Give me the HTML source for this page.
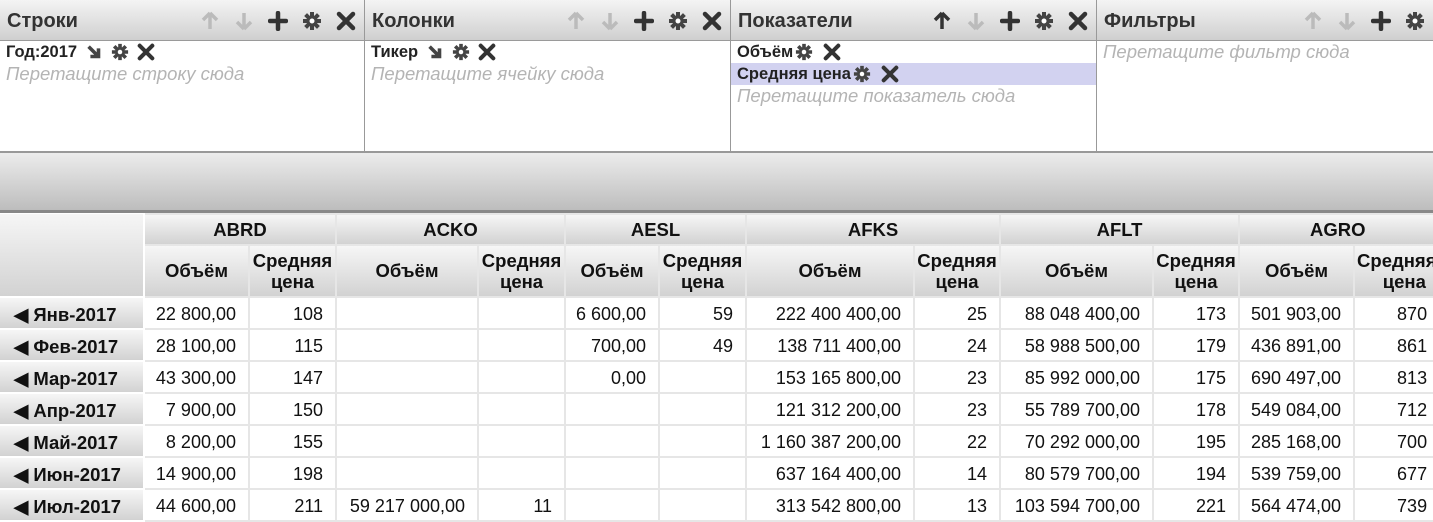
<!DOCTYPE html>
<html><head><meta charset="utf-8"><style>
*{box-sizing:border-box;margin:0;padding:0}
body{width:1433px;height:519px;overflow:hidden;background:#fff;font-family:"Liberation Sans",Arial,sans-serif;position:relative}
.panel{position:absolute;top:0;height:153px;border-right:1px solid #999;border-bottom:2px solid #999}
.ph{height:41px;background:linear-gradient(#f4f4f4,#cfcfcf);border-bottom:1px solid #9a9a9a;position:relative}
.ph .t{position:absolute;left:7px;top:10px;font-weight:bold;font-size:20px;color:#333}
.ph .ic{position:absolute;top:11px;right:8px;display:flex;gap:14px;align-items:center}
.ic svg{width:20px;height:20px;display:block}
.item{font-weight:bold;font-size:16.5px;color:#222;height:22px;line-height:22px;padding-left:6px;display:flex;align-items:center;gap:8px}
.item svg{width:18px;height:18px}
.hint{font-style:italic;color:#b4b4b4;font-size:18.5px;padding-left:6px;line-height:22px}
.bar{position:absolute;top:153px;left:0;width:1433px;height:60px;background:linear-gradient(#ececec,#bdbdbd);border-bottom:3px solid #888}
table{position:absolute;top:213px;left:-2px;border-collapse:collapse;table-layout:fixed;font-size:18px}
td,th{overflow:hidden;white-space:nowrap}
th{background:linear-gradient(#f6f6f6,#d2d2d2);font-weight:bold;color:#111;border:2px solid #e6e6e6;text-align:center;font-size:18.5px}
td{border:2px solid #e6e6e6;text-align:right;padding-right:12px;color:#111;height:32px;padding-top:2px;vertical-align:top;line-height:28px}
th.rh{text-align:left;padding-left:14px;vertical-align:bottom;line-height:26px;border-color:#fff}
.sub{line-height:21px}
</style></head><body>
<svg width="0" height="0" style="position:absolute"><defs>
<symbol id="up" viewBox="0 0 20 20"><path d="M10 2 L3 9 M10 2 L17 9 M10 3 V18" stroke="currentColor" stroke-width="3.5" fill="none"/></symbol>
<symbol id="dn" viewBox="0 0 20 20"><path d="M10 18 L3 11 M10 18 L17 11 M10 17 V2" stroke="currentColor" stroke-width="3.5" fill="none"/></symbol>
<symbol id="pl" viewBox="0 0 20 20"><path d="M10 2 V18 M2 10 H18" stroke="currentColor" stroke-width="4.5" stroke-linecap="round"/></symbol>
<symbol id="gr" viewBox="0 0 20 20"><g stroke="currentColor" stroke-width="4"><path d="M10 1V19M1 10H19M3.6 3.6L16.4 16.4M16.4 3.6L3.6 16.4"/></g><circle cx="10" cy="10" r="5.5" fill="currentColor"/><circle cx="10" cy="10" r="2.5" fill="#fff"/></symbol>
<symbol id="x" viewBox="0 0 20 20"><path d="M3 3L17 17M17 3L3 17" stroke="currentColor" stroke-width="4.5" stroke-linecap="round"/></symbol>
<symbol id="ar" viewBox="0 0 20 20"><path d="M4 4L14 14M15 6V15H6" stroke="currentColor" stroke-width="4" fill="none"/></symbol>
</defs></svg>

<div class="panel" style="left:0;width:365px">
<div class="ph"><span class="t">Строки</span><div class="ic"><svg style="color:#bbb"><use href="#up"/></svg><svg style="color:#bbb"><use href="#dn"/></svg><svg style="color:#333"><use href="#pl"/></svg><svg style="color:#444"><use href="#gr"/></svg><svg style="color:#333"><use href="#x"/></svg></div></div>
<div class="item">Год:2017 <svg style="color:#444"><use href="#ar"/></svg><svg style="color:#444"><use href="#gr"/></svg><svg style="color:#333"><use href="#x"/></svg></div>
<div class="hint">Перетащите строку сюда</div></div>

<div class="panel" style="left:365px;width:366px">
<div class="ph"><span class="t">Колонки</span><div class="ic"><svg style="color:#bbb"><use href="#up"/></svg><svg style="color:#bbb"><use href="#dn"/></svg><svg style="color:#333"><use href="#pl"/></svg><svg style="color:#444"><use href="#gr"/></svg><svg style="color:#333"><use href="#x"/></svg></div></div>
<div class="item">Тикер <svg style="color:#444"><use href="#ar"/></svg><svg style="color:#444"><use href="#gr"/></svg><svg style="color:#333"><use href="#x"/></svg></div>
<div class="hint">Перетащите ячейку сюда</div></div>

<div class="panel" style="left:731px;width:366px">
<div class="ph"><span class="t">Показатели</span><div class="ic"><svg style="color:#333"><use href="#up"/></svg><svg style="color:#bbb"><use href="#dn"/></svg><svg style="color:#333"><use href="#pl"/></svg><svg style="color:#444"><use href="#gr"/></svg><svg style="color:#333"><use href="#x"/></svg></div></div>
<div class="item" style="gap:2px">Объём<svg style="color:#444"><use href="#gr"/></svg><svg style="color:#333;margin-left:8px"><use href="#x"/></svg></div>
<div class="item" style="gap:2px;background:#d2d2f0">Средняя цена<svg style="color:#444"><use href="#gr"/></svg><svg style="color:#333;margin-left:8px"><use href="#x"/></svg></div>
<div class="hint">Перетащите показатель сюда</div></div>

<div class="panel" style="left:1097px;width:340px;border-right:none">
<div class="ph"><span class="t">Фильтры</span><div class="ic" style="right:12px"><svg style="color:#bbb"><use href="#up"/></svg><svg style="color:#bbb"><use href="#dn"/></svg><svg style="color:#333"><use href="#pl"/></svg><svg style="color:#444"><use href="#gr"/></svg></div></div>
<div class="hint" style="padding-top:0">Перетащите фильтр сюда</div></div>

<div class="bar"></div>

<table style="width:1482px">
<colgroup><col style="width:145px"><col style="width:105px"><col style="width:87px"><col style="width:142px"><col style="width:87px"><col style="width:94px"><col style="width:87px"><col style="width:168px"><col style="width:86px"><col style="width:153px"><col style="width:86px"><col style="width:115px"><col style="width:127px"></colgroup>
<tr style="height:31px"><th rowspan="2" style="border-color:#fff;border-top:none"></th><th colspan="2">ABRD</th><th colspan="2">ACKO</th><th colspan="2">AESL</th><th colspan="2">AFKS</th><th colspan="2">AFLT</th><th colspan="2" style="text-align:left;padding-left:70px">AGRO</th></tr>
<tr style="height:52px"><th>Объём</th><th class="sub">Средняя<br>цена</th><th>Объём</th><th class="sub">Средняя<br>цена</th><th>Объём</th><th class="sub">Средняя<br>цена</th><th>Объём</th><th class="sub">Средняя<br>цена</th><th>Объём</th><th class="sub">Средняя<br>цена</th><th>Объём</th><th class="sub" style="text-align:left;padding-left:2px">Средняя<br>&nbsp;&nbsp;&nbsp;&nbsp;&nbsp;цена</th></tr>
<tr><th class="rh">◀ Янв-2017</th><td>22 800,00</td><td>108</td><td></td><td></td><td>6 600,00</td><td>59</td><td>222 400 400,00</td><td>25</td><td>88 048 400,00</td><td>173</td><td>501 903,00</td><td style="text-align:left;padding-left:42px">870</td></tr>
<tr><th class="rh">◀ Фев-2017</th><td>28 100,00</td><td>115</td><td></td><td></td><td>700,00</td><td>49</td><td>138 711 400,00</td><td>24</td><td>58 988 500,00</td><td>179</td><td>436 891,00</td><td style="text-align:left;padding-left:42px">861</td></tr>
<tr><th class="rh">◀ Мар-2017</th><td>43 300,00</td><td>147</td><td></td><td></td><td>0,00</td><td></td><td>153 165 800,00</td><td>23</td><td>85 992 000,00</td><td>175</td><td>690 497,00</td><td style="text-align:left;padding-left:42px">813</td></tr>
<tr><th class="rh">◀ Апр-2017</th><td>7 900,00</td><td>150</td><td></td><td></td><td></td><td></td><td>121 312 200,00</td><td>23</td><td>55 789 700,00</td><td>178</td><td>549 084,00</td><td style="text-align:left;padding-left:42px">712</td></tr>
<tr><th class="rh">◀ Май-2017</th><td>8 200,00</td><td>155</td><td></td><td></td><td></td><td></td><td>1 160 387 200,00</td><td>22</td><td>70 292 000,00</td><td>195</td><td>285 168,00</td><td style="text-align:left;padding-left:42px">700</td></tr>
<tr><th class="rh">◀ Июн-2017</th><td>14 900,00</td><td>198</td><td></td><td></td><td></td><td></td><td>637 164 400,00</td><td>14</td><td>80 579 700,00</td><td>194</td><td>539 759,00</td><td style="text-align:left;padding-left:42px">677</td></tr>
<tr><th class="rh">◀ Июл-2017</th><td>44 600,00</td><td>211</td><td>59 217 000,00</td><td>11</td><td></td><td></td><td>313 542 800,00</td><td>13</td><td>103 594 700,00</td><td>221</td><td>564 474,00</td><td style="text-align:left;padding-left:42px">739</td></tr>
</table>
</body></html>
